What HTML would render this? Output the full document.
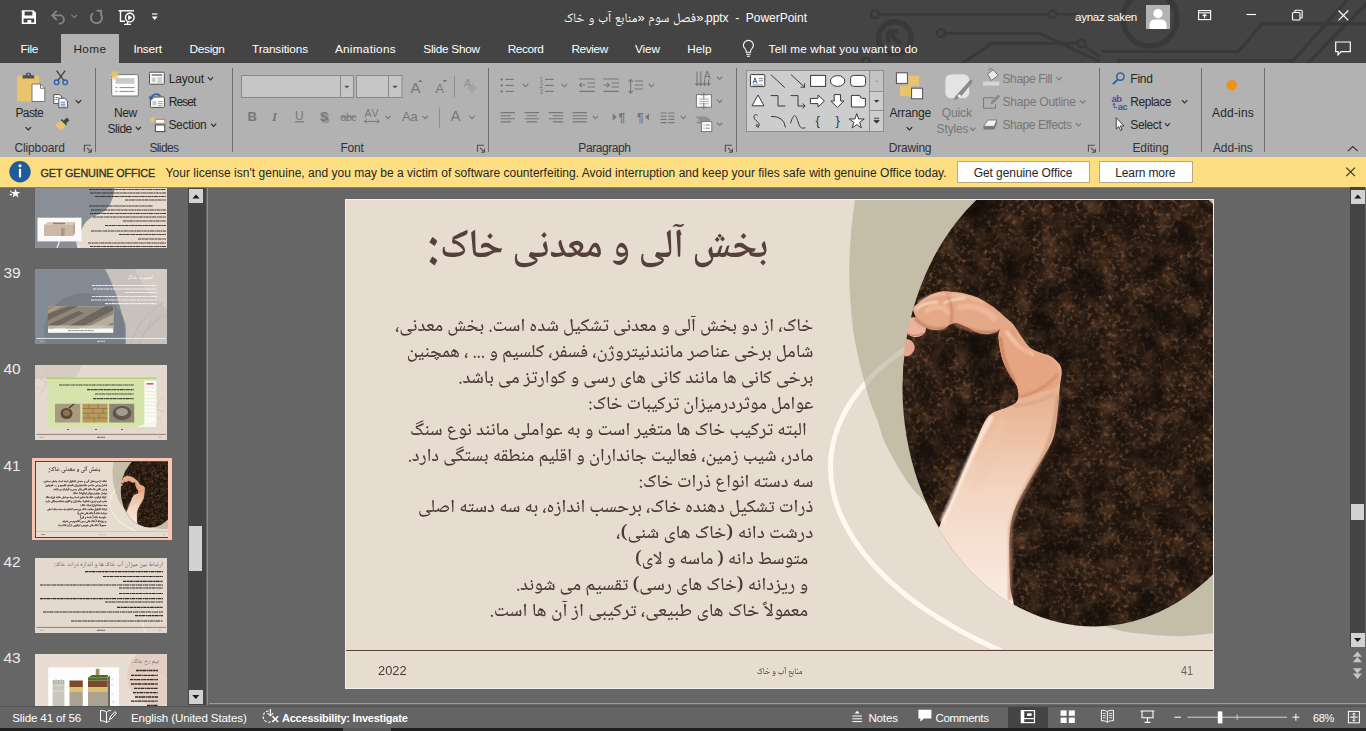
<!DOCTYPE html>
<html lang="en">
<head>
<meta charset="utf-8">
<title>PowerPoint</title>
<style>
*{box-sizing:border-box;margin:0;padding:0}
html,body{width:1366px;height:731px;overflow:hidden;background:#666}
body{font-family:"Liberation Sans","Noto Naskh Arabic","DejaVu Sans",sans-serif;font-size:12px;color:#262626;position:relative}
.a{position:absolute}
.t{position:absolute;white-space:nowrap;line-height:1}
svg{position:absolute;overflow:visible}
#titlebar{position:absolute;left:0;top:0;width:1366px;height:63px;background:#444;overflow:hidden}
#hometab{position:absolute;left:61px;top:34px;width:58px;height:30px;background:#b2b2b2}
#ribbon{position:absolute;left:0;top:63px;width:1366px;height:94px;background:#b2b2b2}
.vsep{position:absolute;width:1px;background:#6e6e6e;top:68px;height:84px}
#msgbar{position:absolute;left:0;top:157px;width:1366px;height:30.7px;background:#fdde82;border-bottom:1px solid #8d815f}
.mbtn{position:absolute;top:161px;height:21.5px;background:#fefefe;border:1px solid #b9aa7c}
#status{position:absolute;left:0;top:706px;width:1366px;height:22px;background:#646464;border-top:1px solid #525252}
#bottom{position:absolute;left:0;top:728px;width:1366px;height:3px;background:#1e1e1e}
#slide{position:absolute;left:345px;top:199px;width:869px;height:490px;background:#f4eee7}
.thumb{position:absolute;left:35px;width:132px;height:75px;overflow:hidden;background:#e7dcd0}
.num{position:absolute;left:3.5px;font-size:15.5px;color:#ececec;line-height:1}
#app{position:absolute;left:0;top:0;width:1366px;height:731px}

</style>
</head>
<body>
<div class="a" style="left:188px;top:187px;width:17.500px;height:518px;background:#444"></div>
<div class="a" style="left:189px;top:189px;width:14px;height:14px;background:#d2d2d2"></div>
<div class="a" style="left:189px;top:526px;width:13px;height:45px;background:#d2d2d2"></div>
<div class="a" style="left:189px;top:690px;width:13.500px;height:13.500px;background:#d2d2d2"></div>
<div class="a" style="left:207px;top:187px;width:1px;height:517.500px;background:#8c8c8c"></div>
<svg width="208" height="519" viewBox="0 187 208 519" style="left:0;top:187px"><path d="M192.400 198.400 l3.600 -4 l3.600 4 z M192.200 695 h7.200 l-3.600 4 z" fill="#1a1a1a"/><path d="M15.50 188.70 L16.68 191.98 L20.16 192.09 L17.40 194.22 L18.38 197.56 L15.50 195.60 L12.62 197.56 L13.60 194.22 L10.84 192.09 L14.32 191.98 Z" fill="#fafafa"/><path d="M10 191.200 h1.600 M9.800 194.600 h2.200" stroke="#fafafa" stroke-width="1.100"/></svg>
<div class="num" style="top:265.4px">39</div>
<div class="num" style="top:361.4px">40</div>
<div class="num" style="top:457.9px">41</div>
<div class="num" style="top:553.9px">42</div>
<div class="num" style="top:649.9px">43</div>
<svg width="132" height="75" viewBox="0 0 132 75" style="left:35px;top:173px;overflow:hidden"><rect width="132" height="75" fill="#e6dbcf"/><path d="M0 0 H80 C80 22 78 36 62 42 C48 47 46 56 42 75 H0 Z" fill="#8a8e96"/><path d="M22 75 l3 -8 M44 75 l-3 -8" stroke="#f3efe9" stroke-width="1.200"/><rect x="2.500" y="44.700" width="44" height="23.700" fill="#fbfaf8"/><path d="M9 52 l4 -3 h27 l-2 3 z" fill="#d9cbbb"/><rect x="9" y="52" width="29" height="11" fill="#cbb9a6"/><path d="M38 52 l2 -3 v11 l-2 3 z" fill="#b7a592"/><path d="M18 50.500 h12" stroke="#8d7f72" stroke-width="1.500"/><rect x="26" y="55" width="3.500" height="8" fill="#a8988a"/><path d="M54.0 16.5 H131.0 M55.0 20.0 H131.0 M60.0 23.5 H131.0 M90.0 27.0 H131.0 M54.0 33.0 H118.0 M56.0 37.0 H131.0 M55.0 40.5 H131.0 M58.0 44.0 H131.0 M88.0 48.0 H131.0 M70.0 52.5 H131.0 M56.0 58.0 H131.0 M84.0 61.5 H131.0 M103.0 66.0 H131.0 M53.0 70.0 H131.0 M55.0 73.5 H131.0 " stroke="#2a1f1b" stroke-width="1.1" fill="none" opacity="0.85" stroke-dasharray="3.400 0.500 2 0.400 4.200 0.600 1.600 0.400"/></svg>
<svg width="132" height="75" viewBox="0 0 132 75" style="left:35px;top:269px;overflow:hidden"><rect width="132" height="75" fill="#858b95"/><path d="M70 0 H132 V75 H91 C90 50 82 22 70 0 Z" fill="#c9c1bb"/><path d="M100 0 H132 V40 C118 30 106 16 100 0 Z" fill="#d9d0c8" opacity="0.700"/><path d="M96 75 C100 60 110 45 128 34 M104 75 C108 64 116 54 130 46 M112 62 l4 -10 M118 56 l6 -9 M108 66 l-6 -6" stroke="#bdb5af" stroke-width="1" fill="none"/><ellipse cx="50" cy="62" rx="41" ry="38" fill="#767c86" opacity="0.800"/><rect x="13" y="37.200" width="65.300" height="26.600" fill="#fbfaf8"/><rect x="13" y="37.200" width="65.300" height="22" fill="#8f8679"/><path d="M13 45 l20 -7.800 h10 l-30 14 z M30 59.200 l40 -22 h8.300 v4 l-34 18 z M13 56 l30 -14 l6 2 l-30 15.200 h-6 z" fill="#6d675e"/><path d="M50 59.200 l28.300 -14 v8 l-12 6 z" fill="#b9ae9c"/><path d="M13 41 l8 -3.800 h6 l-14 7 z" fill="#b09c7c"/><path d="M13 56.500 h65.300 v2.700 h-65.300 z" fill="#c9c5bd" opacity="0.800"/><path d="M33.0 61.6 H59.0 " stroke="#555" stroke-width="0.9" fill="none" opacity="0.7" stroke-dasharray="3.400 0.500 2 0.400 4.200 0.600 1.600 0.400"/><path d="M57.0 16.5 H122.0 M58.0 20.0 H122.0 M90.0 23.5 H122.0 M57.0 27.5 H122.0 M56.0 31.0 H122.0 M70.0 34.6 H122.0 " stroke="#f4f4f4" stroke-width="1.1" fill="none" opacity="0.9" stroke-dasharray="3.400 0.500 2 0.400 4.200 0.600 1.600 0.400"/><text x="118.5" y="10.3" direction="rtl" font-family="'Noto Naskh Arabic','DejaVu Sans',sans-serif" font-size="5.6" fill="#f6f6f6" textLength="26.0" lengthAdjust="spacingAndGlyphs">اهمیت خاک</text><path d="M1.500 69.400 H131" stroke="#f0f0f0" stroke-width="0.900"/><path d="M62.0 72.3 H70.0 " stroke="#f4f4f4" stroke-width="0.9" fill="none" opacity="0.8" stroke-dasharray="3.400 0.500 2 0.400 4.200 0.600 1.600 0.400"/><path d="M5.0 72.3 H9.0 M124.0 72.3 H126.0 " stroke="#d8d8d8" stroke-width="0.8" fill="none" opacity="0.6" stroke-dasharray="3.400 0.500 2 0.400 4.200 0.600 1.600 0.400"/></svg>
<svg width="132" height="75" viewBox="0 0 132 75" style="left:35px;top:365px;overflow:hidden"><rect width="132" height="75" fill="#e3d9cf"/><path d="M0 0 H46 C46 8 40 14 30 14 H0 Z" fill="#d6ccc1"/><path d="M4 30 C10 24 14 14 12 4 M8 26 l-6 -4 M11 18 l-7 -5 M122 62 C118 50 120 40 128 32 M121 52 l6 2 M122 44 l7 3" stroke="#d3c9be" stroke-width="1" fill="none"/><rect x="12" y="12.700" width="109.400" height="49.300" fill="#d7e3ac"/><rect x="12" y="12.700" width="109.400" height="1" fill="#a9c656"/><path d="M109.400 15.400 H121.400 V56 L115 62 H109.400 Z" fill="#fbfbf6"/><path d="M110.500 23 h10 M110.500 26.500 h10 M110.500 30 h10 M110.500 33.500 h10 M110.500 37 h10 M110.500 40.500 h10 M110.500 44 h10 M110.500 47.500 h10 M110.500 51 h10" stroke="#dfe6c6" stroke-width="0.600"/><path d="M111.500 18.800 h7" stroke="#e0508c" stroke-width="1.600"/><path d="M101 62 l20.400 -7 v7 z" fill="#f6f6ee"/><rect x="20" y="38.800" width="25.300" height="18.700" fill="#a79a7e"/><ellipse cx="31.500" cy="48.500" rx="6" ry="5.500" fill="#5d4a34"/><ellipse cx="31.500" cy="48" rx="3.500" ry="3" fill="#8c7350"/><path d="M34 43 l5 -4" stroke="#4a3a2a" stroke-width="1.500"/><rect x="47.500" y="38.800" width="25" height="18.700" fill="#b99a5e"/><path d="M47.500 43.500 h25 M47.500 48.200 h25 M47.500 53 h25 M54 38.800 v4.700 M63 38.800 v4.700 M58 43.500 v4.700 M68 43.500 v4.700 M53 48.200 v4.800 M64 48.200 v4.800 M59 53 v4.500" stroke="#8a6f3e" stroke-width="0.700"/><rect x="74.200" y="38.800" width="25" height="18.700" fill="#8e8674"/><ellipse cx="87" cy="48" rx="9.500" ry="7" fill="#5f574b"/><ellipse cx="87" cy="47" rx="6" ry="4" fill="#a39c8e"/><path d="M24.0 20.0 H98.7 M52.0 24.6 H98.7 M60.0 29.0 H98.7 M58.0 33.6 H98.7 " stroke="#2a2a1c" stroke-width="1.1" fill="none" opacity="0.85" stroke-dasharray="3.400 0.500 2 0.400 4.200 0.600 1.600 0.400"/><path d="M32.0 64.5 H34.0 M60.0 64.5 H62.0 M86.0 64.5 H88.0 " stroke="#333" stroke-width="0.9" fill="none" opacity="0.8" stroke-dasharray="3.400 0.500 2 0.400 4.200 0.600 1.600 0.400"/><path d="M1.500 69.400 H131" stroke="#5e443a" stroke-width="0.600"/><path d="M62.0 72.3 H70.0 " stroke="#3a2a25" stroke-width="0.9" fill="none" opacity="0.8" stroke-dasharray="3.400 0.500 2 0.400 4.200 0.600 1.600 0.400"/><path d="M5.0 72.3 H9.0 M124.0 72.3 H126.0 " stroke="#8a7a72" stroke-width="0.8" fill="none" opacity="0.6" stroke-dasharray="3.400 0.500 2 0.400 4.200 0.600 1.600 0.400"/></svg>
<div class="a" style="left:32px;top:457.500px;width:139.500px;height:82.500px;background:#f7c5b1"></div>
<div class="a" style="left:34.500px;top:460.500px;width:133.500px;height:77px;background:#4a4444"></div>
<svg width="132" height="75" viewBox="0 0 132 75" style="left:35.500px;top:461.500px;overflow:hidden"><g transform="scale(0.15225 0.15369) translate(-346 -200)"><use href="#sg"/><use href="#stt" stroke="#55403a" stroke-width="0.800" stroke-opacity="0.600"/><use href="#st" stroke="#3a2b26" stroke-width="1.800" stroke-opacity="0.700"/><use href="#sf"/></g></svg>
<svg width="132" height="75" viewBox="0 0 132 75" style="left:35px;top:557.5px;overflow:hidden"><rect width="132" height="75" fill="#e3d9cf"/><path d="M112 75 C104 66 108 56 122 52" stroke="#fbf5ee" stroke-width="0.900" fill="none"/><text x="128.0" y="8.2" direction="rtl" font-family="'Noto Naskh Arabic','DejaVu Sans',sans-serif" font-size="6.2" fill="#6a5a55" textLength="109.0" lengthAdjust="spacingAndGlyphs">ارتباط بین میزان آب خاک ها و اندازه ذرات خاک:</text><path d="M50.0 13.6 H128.0 M68.0 18.5 H128.0 M88.0 23.4 H128.0 M5.0 27.0 H128.0 M84.0 30.0 H128.0 M84.0 35.5 H128.0 M5.0 40.6 H128.0 M70.0 44.0 H128.0 M82.0 49.3 H128.0 M8.0 54.0 H128.0 M100.0 57.6 H128.0 M36.0 63.0 H128.0 " stroke="#1f1714" stroke-width="1.2" fill="none" opacity="0.9" stroke-dasharray="3.400 0.500 2 0.400 4.200 0.600 1.600 0.400"/><path d="M1.500 69.400 H131" stroke="#5e443a" stroke-width="0.600"/><path d="M62.0 72.3 H70.0 " stroke="#3a2a25" stroke-width="0.9" fill="none" opacity="0.8" stroke-dasharray="3.400 0.500 2 0.400 4.200 0.600 1.600 0.400"/><path d="M5.0 72.3 H9.0 M124.0 72.3 H126.0 " stroke="#8a7a72" stroke-width="0.8" fill="none" opacity="0.6" stroke-dasharray="3.400 0.500 2 0.400 4.200 0.600 1.600 0.400"/></svg>
<svg width="132" height="75" viewBox="0 0 132 75" style="left:35px;top:653.5px;overflow:hidden"><rect width="132" height="75" fill="#e8ddd2"/><circle cx="122" cy="22" r="30" fill="#e4cfc5"/><path d="M96 30 C110 14 124 20 132 26" stroke="#f0e2da" stroke-width="0.800" fill="none"/><rect x="13.200" y="13.400" width="70.800" height="52" fill="#fdfdfd"/><rect x="17.600" y="26" width="11.800" height="30" fill="#c9c6bd"/><path d="M18.500 26 v5 M21 25 v6 M23.500 26 v5 M26 25 v6 M28.500 26 v5" stroke="#9a968c" stroke-width="0.500"/><path d="M17.600 31 h11.800 M17.600 37 h11.800" stroke="#efefef" stroke-width="0.500"/><rect x="34.500" y="26.500" width="13.300" height="6.500" fill="#7a4a2a"/><rect x="34.500" y="33" width="13.300" height="4.500" fill="#dcbf72"/><rect x="34.500" y="37.500" width="13.300" height="20" fill="#aaa392"/><rect x="60.800" y="14.800" width="3.600" height="8.500" fill="#a08d62"/><path d="M53 23.500 l4 -2.500 h16 l-0.300 2.500 z" fill="#4c6a26"/><rect x="53" y="23.500" width="19.700" height="3" fill="#55702a"/><rect x="53" y="26.500" width="19.700" height="6.500" fill="#7a4a2a"/><rect x="53" y="33" width="19.700" height="4.500" fill="#dcbf72"/><rect x="53" y="37.500" width="19.700" height="20" fill="#aaa392"/><path d="M72.700 23.500 l2.300 -2 v36 h-2.300 z" fill="#6f6757"/><path d="M76.500 25 h1.500 M76.500 31 h1.500 M76.500 40 h1.500 M76.500 48 h3" stroke="#aaa" stroke-width="0.600"/><text x="124.0" y="9.0" direction="rtl" font-family="'Noto Naskh Arabic','DejaVu Sans',sans-serif" font-size="5.8" fill="#7a6a66" textLength="27.5" lengthAdjust="spacingAndGlyphs">نیم رخ خاک:</text><path d="M101.0 16.5 H123.0 M96.0 21.4 H123.0 M95.0 25.7 H123.0 M96.0 30.0 H123.0 M99.0 34.4 H123.0 M98.0 38.7 H123.0 M100.0 43.0 H123.0 M96.0 47.2 H123.0 M112.0 51.5 H123.0 " stroke="#1f1714" stroke-width="1.3" fill="none" opacity="0.9" stroke-dasharray="3.400 0.500 2 0.400 4.200 0.600 1.600 0.400"/></svg><div id="slide"></div>
<svg width="867" height="488" viewBox="346 200 867 488" style="left:346px;top:200px;overflow:hidden">
<defs><clipPath id="cs"><rect x="346" y="200" width="867" height="488"/></clipPath><clipPath id="cp"><ellipse cx="1093.13" cy="388.54" rx="190.65" ry="237.88" transform="rotate(-0.55 1093.13 388.54)"/></clipPath><clipPath id="cp2"><ellipse cx="1093.13" cy="388.54" rx="191.35" ry="238.58" transform="rotate(-0.55 1093.13 388.54)"/></clipPath><clipPath id="cw"><rect x="346" y="200" width="867" height="449"/></clipPath><filter id="soil" x="0" y="0" width="100%" height="100%" color-interpolation-filters="sRGB"><feTurbulence type="fractalNoise" baseFrequency="0.24" numOctaves="3" seed="7" result="n"/><feColorMatrix in="n" type="matrix" values="0 0 0 0 0.43  0 0 0 0 0.30  0 0 0 0 0.20  3.0 0 0 0 -1.50" result="g"/><feTurbulence type="fractalNoise" baseFrequency="0.07" numOctaves="2" seed="11" result="m"/><feColorMatrix in="m" type="matrix" values="0 0 0 0 0.30  0 0 0 0 0.20  0 0 0 0 0.135  0 2.6 0 0 -1.06" result="g2"/><feTurbulence type="fractalNoise" baseFrequency="0.03" numOctaves="2" seed="3" result="n2"/><feColorMatrix in="n2" type="matrix" values="0 0 0 0 0.06  0 0 0 0 0.04  0 0 0 0 0.03  0 0 2.0 0 -0.78" result="d"/><feMerge><feMergeNode in="SourceGraphic"/><feMergeNode in="g2"/><feMergeNode in="g"/><feMergeNode in="d"/></feMerge></filter><linearGradient id="skin" x1="0" y1="0" x2="0" y2="1"><stop offset="0" stop-color="#e2a583"/><stop offset="0.35" stop-color="#e9b595"/><stop offset="0.62" stop-color="#f3d6c2"/><stop offset="1" stop-color="#fbefe8"/></linearGradient><filter id="b1"><feGaussianBlur stdDeviation="1.2"/></filter><filter id="b3"><feGaussianBlur stdDeviation="3"/></filter></defs>
<g id="sg">
<rect x="346" y="200" width="867" height="488" fill="#e7dcd0"/>
<g clip-path="url(#cw)"><ellipse cx="1248.5" cy="492.5" rx="419" ry="214.5" transform="rotate(4.7 1248.5 492.5)" fill="none" stroke="#fff8f0" stroke-width="5"/></g>
<path d="M857.0 180.0 C792.8 183.3 855.9 190.7 854.9 199.6 C853.9 208.5 852.0 221.3 851.1 233.3 C850.2 245.3 849.2 258.8 849.2 271.6 C849.2 284.4 850.2 298.4 851.1 309.9 C852.0 321.4 853.0 329.6 854.9 340.5 C856.8 351.4 860.0 364.8 862.6 375.0 C865.2 385.2 867.8 394.3 870.2 401.8 C872.7 409.3 875.1 413.8 877.3 420.0 C879.5 426.2 880.8 432.8 883.4 439.2 C886.0 445.6 889.5 451.9 893.0 458.3 C896.5 464.7 900.4 471.4 904.5 477.5 C908.6 483.6 911.1 487.3 917.9 494.7 C924.6 502.1 931.3 508.6 945.0 522.0 C958.7 535.4 980.8 560.3 1000.0 575.0 C1019.2 589.7 1041.2 601.1 1060.0 610.0 C1078.8 618.9 1100.1 624.6 1112.9 628.5 C1125.7 632.4 1127.1 632.0 1136.8 633.3 C1146.5 634.5 1161.9 635.6 1171.0 636.0 C1180.1 636.4 1184.8 635.9 1191.6 635.4 C1198.4 634.9 1204.0 634.5 1212.1 633.3 C1220.2 632.1 1235.3 703.5 1240.0 628.0 C1244.7 552.5 1303.8 254.7 1240.0 180.0 C1176.2 105.3 921.2 176.7 857.0 180.0 Z" fill="#a19e80" fill-opacity="0.5"/>
<g clip-path="url(#cp)">
<rect x="895" y="200" width="320" height="440" fill="#241811" filter="url(#soil)"/>
</g><g clip-path="url(#cp2)">
<path d="M913.1 308.7 C913.5 307.3 913.8 306.7 916.3 304.6 C918.8 302.6 923.7 298.6 927.8 296.4 C931.9 294.2 936.1 292.2 941.0 291.5 C945.9 290.8 952.8 291.8 957.4 292.3 C962.0 292.9 965.1 293.7 968.9 294.8 C972.7 295.9 976.3 296.8 980.4 298.9 C984.5 300.9 989.4 304.1 993.5 307.1 C997.6 310.1 1001.7 314.1 1005.0 317.0 C1008.3 319.9 1010.7 321.4 1013.2 324.3 C1015.7 327.2 1017.0 330.4 1019.8 334.2 C1022.5 338.0 1026.4 344.3 1029.7 347.3 C1033.0 350.3 1036.0 350.8 1039.5 352.3 C1043.0 353.8 1047.7 354.5 1051.0 356.4 C1054.3 358.3 1057.4 361.2 1059.2 363.8 C1061.0 366.4 1061.6 368.4 1061.7 372.0 C1061.8 375.6 1060.3 382.1 1060.0 385.1 C1059.7 388.1 1060.2 383.7 1059.6 390.0 C1059.0 396.3 1057.7 414.1 1056.3 422.9 C1054.9 431.7 1054.4 435.5 1051.4 442.6 C1048.4 449.7 1042.7 457.9 1038.3 465.6 C1033.9 473.3 1028.9 481.5 1025.1 488.6 C1021.3 495.7 1017.8 501.7 1015.3 508.3 C1012.8 514.9 1011.3 520.3 1010.3 528.0 C1009.3 535.7 1009.4 544.4 1009.4 554.3 C1009.4 564.1 1009.9 578.1 1010.3 587.1 C1010.7 596.1 1016.2 603.9 1012.0 608.0 C1007.8 612.1 999.5 624.7 985.0 612.0 C970.5 599.3 932.8 546.0 925.0 532.0 C917.2 518.0 935.3 529.8 938.0 528.0 C940.7 526.2 939.5 525.2 941.4 521.4 C943.3 517.6 946.9 511.0 949.6 505.0 C952.3 499.0 955.1 491.9 957.8 485.3 C960.5 478.7 963.0 472.7 966.0 465.6 C969.0 458.5 972.8 449.7 975.8 442.6 C978.8 435.5 981.2 427.8 984.0 422.9 C986.8 418.0 988.7 415.5 992.3 413.0 C995.9 410.5 1001.6 409.6 1005.4 408.0 C1009.2 406.4 1013.1 405.1 1015.3 403.1 C1017.5 401.1 1018.2 399.0 1018.4 396.0 C1018.6 393.0 1017.9 388.6 1016.5 385.1 C1015.1 381.7 1012.2 379.1 1010.0 375.3 C1007.8 371.5 1005.0 366.5 1003.4 362.1 C1001.8 357.7 1000.9 353.4 1000.1 349.0 C999.3 344.6 998.5 339.1 998.5 335.8 C998.5 332.5 1000.4 330.0 1000.1 329.3 C999.8 328.6 999.0 330.9 996.8 331.7 C994.6 332.5 990.3 334.0 987.0 334.2 C983.7 334.4 980.4 333.7 977.1 332.6 C973.8 331.5 970.6 329.1 967.3 327.6 C964.0 326.1 960.1 324.1 957.4 323.5 C954.6 322.9 953.0 323.5 950.8 324.3 C948.6 325.1 946.8 327.4 944.3 328.4 C941.8 329.4 938.8 330.1 936.0 330.1 C933.2 330.1 930.2 329.4 927.8 328.4 C925.3 327.4 923.2 326.1 921.3 324.3 C919.4 322.5 917.5 319.7 916.3 317.8 C915.1 315.9 914.4 314.3 913.9 312.8 C913.4 311.3 912.7 310.1 913.1 308.7 Z" fill="#2a1a12" opacity="0.600" filter="url(#b3)" transform="translate(2.500 3)"/>
<path d="M905 322 C909 315 920 316 925 324 C928 331 924 336 917 337 C911 337.500 906 334 904 329 Z" fill="#eab39d"/>
<path d="M906.500 333 C911 336 918 336.500 923 333" stroke="#b9755c" stroke-width="1.200" fill="none" opacity="0.700"/>
<path d="M902 340 C907 337.500 913 340 914.700 346 C915 352 911 356 905 356.500 C902 353 901 346 902 340 Z" fill="#e4a790"/>
<path d="M913.1 308.7 C913.5 307.3 913.8 306.7 916.3 304.6 C918.8 302.6 923.7 298.6 927.8 296.4 C931.9 294.2 936.1 292.2 941.0 291.5 C945.9 290.8 952.8 291.8 957.4 292.3 C962.0 292.9 965.1 293.7 968.9 294.8 C972.7 295.9 976.3 296.8 980.4 298.9 C984.5 300.9 989.4 304.1 993.5 307.1 C997.6 310.1 1001.7 314.1 1005.0 317.0 C1008.3 319.9 1010.7 321.4 1013.2 324.3 C1015.7 327.2 1017.0 330.4 1019.8 334.2 C1022.5 338.0 1026.4 344.3 1029.7 347.3 C1033.0 350.3 1036.0 350.8 1039.5 352.3 C1043.0 353.8 1047.7 354.5 1051.0 356.4 C1054.3 358.3 1057.4 361.2 1059.2 363.8 C1061.0 366.4 1061.6 368.4 1061.7 372.0 C1061.8 375.6 1060.3 382.1 1060.0 385.1 C1059.7 388.1 1060.2 383.7 1059.6 390.0 C1059.0 396.3 1057.7 414.1 1056.3 422.9 C1054.9 431.7 1054.4 435.5 1051.4 442.6 C1048.4 449.7 1042.7 457.9 1038.3 465.6 C1033.9 473.3 1028.9 481.5 1025.1 488.6 C1021.3 495.7 1017.8 501.7 1015.3 508.3 C1012.8 514.9 1011.3 520.3 1010.3 528.0 C1009.3 535.7 1009.4 544.4 1009.4 554.3 C1009.4 564.1 1009.9 578.1 1010.3 587.1 C1010.7 596.1 1016.2 603.9 1012.0 608.0 C1007.8 612.1 999.5 624.7 985.0 612.0 C970.5 599.3 932.8 546.0 925.0 532.0 C917.2 518.0 935.3 529.8 938.0 528.0 C940.7 526.2 939.5 525.2 941.4 521.4 C943.3 517.6 946.9 511.0 949.6 505.0 C952.3 499.0 955.1 491.9 957.8 485.3 C960.5 478.7 963.0 472.7 966.0 465.6 C969.0 458.5 972.8 449.7 975.8 442.6 C978.8 435.5 981.2 427.8 984.0 422.9 C986.8 418.0 988.7 415.5 992.3 413.0 C995.9 410.5 1001.6 409.6 1005.4 408.0 C1009.2 406.4 1013.1 405.1 1015.3 403.1 C1017.5 401.1 1018.2 399.0 1018.4 396.0 C1018.6 393.0 1017.9 388.6 1016.5 385.1 C1015.1 381.7 1012.2 379.1 1010.0 375.3 C1007.8 371.5 1005.0 366.5 1003.4 362.1 C1001.8 357.7 1000.9 353.4 1000.1 349.0 C999.3 344.6 998.5 339.1 998.5 335.8 C998.5 332.5 1000.4 330.0 1000.1 329.3 C999.8 328.6 999.0 330.9 996.8 331.7 C994.6 332.5 990.3 334.0 987.0 334.2 C983.7 334.4 980.4 333.7 977.1 332.6 C973.8 331.5 970.6 329.1 967.3 327.6 C964.0 326.1 960.1 324.1 957.4 323.5 C954.6 322.9 953.0 323.5 950.8 324.3 C948.6 325.1 946.8 327.4 944.3 328.4 C941.8 329.4 938.8 330.1 936.0 330.1 C933.2 330.1 930.2 329.4 927.8 328.4 C925.3 327.4 923.2 326.1 921.3 324.3 C919.4 322.5 917.5 319.7 916.3 317.8 C915.1 315.9 914.4 314.3 913.9 312.8 C913.4 311.3 912.7 310.1 913.1 308.7 Z" fill="url(#skin)"/>
<path d="M1000.1 329.3 C1001.0 327.8 1002.6 327.1 1004.0 326.5 C1005.4 325.9 1006.8 325.8 1008.3 326.0 C1009.8 326.2 1011.3 326.3 1013.2 328.0 C1015.1 329.7 1017.2 332.7 1019.8 336.0 C1022.4 339.3 1025.7 345.1 1029.0 348.0 C1032.3 350.9 1036.0 351.8 1039.5 353.5 C1043.0 355.2 1047.1 356.1 1050.0 358.0 C1052.9 359.9 1055.4 362.5 1057.0 365.0 C1058.6 367.5 1059.5 369.5 1059.5 373.0 C1059.5 376.5 1060.2 382.8 1057.0 386.0 C1053.8 389.2 1045.8 390.2 1040.0 392.0 C1034.2 393.8 1025.8 398.0 1022.0 397.0 C1018.2 396.0 1019.0 389.6 1017.0 386.0 C1015.0 382.4 1012.3 379.3 1010.0 375.3 C1007.7 371.3 1005.0 366.5 1003.4 362.1 C1001.8 357.7 1000.9 353.4 1000.1 349.0 C999.3 344.6 998.5 339.1 998.5 335.8 C998.5 332.5 999.2 330.9 1000.1 329.3 Z" fill="#e6a582"/>
<g filter="url(#b1)" fill="none"><path d="M915.500 310 C920 305 929 302 938.500 302" stroke="#f7e3cf" stroke-width="1.800"/><path d="M943 303.500 C949 300 957 298.500 965 298.500" stroke="#f7e3cf" stroke-width="1.800"/><path d="M918 303 C926 296.500 936 293.500 946 294 M950 295 C960 294 972 297 984 303" stroke="#f3c4a8" stroke-width="2.400" opacity="0.800"/><path d="M925 312 C935 305 945 306 948 314" stroke="#f3bfa2" stroke-width="5" opacity="0.700"/><path d="M958 308 C972 303 988 310 996 320" stroke="#f3bfa2" stroke-width="6" opacity="0.700"/><path d="M951 324 C952.500 315 952 305 948.500 297" stroke="#b9694a" stroke-width="1.600" opacity="0.750"/><path d="M915 318 C922 327 936 331.500 946 327.500 M955 324 C966 329.500 985 335.500 998 331" stroke="#b86f50" stroke-width="2.600" opacity="0.800"/><path d="M1006 331 C1012 340 1022 350 1034 355" stroke="#f5ceb2" stroke-width="4" opacity="0.800"/><path d="M1000.500 337 C1001.500 352 1005 366 1015 382" stroke="#b9694a" stroke-width="2.600" opacity="0.650"/><path d="M1012 330 C1016 340 1024 350 1032 356" stroke="#c98462" stroke-width="1.200" opacity="0.500"/><path d="M1019 397 C1032 394 1047 387 1058 374" stroke="#b9694a" stroke-width="1.800" opacity="0.600"/><path d="M1014 406 C1027 405 1042 401 1054 394" stroke="#c98a6a" stroke-width="1.500" opacity="0.550"/><path d="M1058 395 C1056 425 1050 445 1037 467 C1026 487 1015 507 1010.500 528 L1010 600" stroke="#c48d70" stroke-width="4" opacity="0.600"/><path d="M992 416 C982 432 968 462 952 500 L942 522" stroke="#fdeee4" stroke-width="5" opacity="0.750"/><path d="M1003 420 C995 440 985 465 975 490" stroke="#f1c9ae" stroke-width="10" opacity="0.350"/></g>
</g>
<rect x="346" y="650" width="867" height="1" fill="#5e443a"/>
</g><g id="stt">
<text x="768.2" y="256.5" direction="rtl" text-anchor="start" font-family="'Noto Naskh Arabic','DejaVu Sans',sans-serif" font-size="40.5" font-weight="600" fill="#55403a" textLength="341.7" lengthAdjust="spacingAndGlyphs">بخش آلی و معدنی خاک<tspan dy="5.500" font-size="56">:</tspan></text>
</g><g id="st">
<text x="813.3" y="330.7" direction="rtl" text-anchor="start" font-family="'Noto Naskh Arabic','DejaVu Sans',sans-serif" font-size="18.2" font-weight="500" fill="#4b3a33" textLength="418.3" lengthAdjust="spacingAndGlyphs">خاک، از دو بخش آلی و معدنی تشکیل شده است. بخش معدنی،</text>
<text x="813.3" y="356.7" direction="rtl" text-anchor="start" font-family="'Noto Naskh Arabic','DejaVu Sans',sans-serif" font-size="18.2" font-weight="500" fill="#4b3a33" textLength="406.6" lengthAdjust="spacingAndGlyphs">شامل برخی عناصر مانندنیتروژن، فسفر، کلسیم و ... ، همچنین</text>
<text x="813.3" y="382.6" direction="rtl" text-anchor="start" font-family="'Noto Naskh Arabic','DejaVu Sans',sans-serif" font-size="18.2" font-weight="500" fill="#4b3a33" textLength="355.0" lengthAdjust="spacingAndGlyphs">برخی کانی ها مانند کانی های رسی و کوارتز می باشد.</text>
<text x="813.3" y="408.6" direction="rtl" text-anchor="start" font-family="'Noto Naskh Arabic','DejaVu Sans',sans-serif" font-size="18.2" font-weight="500" fill="#4b3a33" textLength="225.0" lengthAdjust="spacingAndGlyphs">عوامل موثردرمیزان ترکیبات خاک:</text>
<text x="806.7" y="434.5" direction="rtl" text-anchor="start" font-family="'Noto Naskh Arabic','DejaVu Sans',sans-serif" font-size="18.2" font-weight="500" fill="#4b3a33" textLength="396.7" lengthAdjust="spacingAndGlyphs">البته ترکیب خاک ها متغیر است و به عواملی مانند نوع سنگ</text>
<text x="813.3" y="460.5" direction="rtl" text-anchor="start" font-family="'Noto Naskh Arabic','DejaVu Sans',sans-serif" font-size="18.2" font-weight="500" fill="#4b3a33" textLength="405.5" lengthAdjust="spacingAndGlyphs">مادر، شیب زمین، فعالیت جانداران و اقلیم منطقه بستگی دارد.</text>
<text x="813.3" y="486.5" direction="rtl" text-anchor="start" font-family="'Noto Naskh Arabic','DejaVu Sans',sans-serif" font-size="18.2" font-weight="500" fill="#4b3a33" textLength="174.5" lengthAdjust="spacingAndGlyphs">سه دسته انواع ذرات خاک:</text>
<text x="813.3" y="512.4" direction="rtl" text-anchor="start" font-family="'Noto Naskh Arabic','DejaVu Sans',sans-serif" font-size="18.2" font-weight="500" fill="#4b3a33" textLength="395.3" lengthAdjust="spacingAndGlyphs">ذرات تشکیل دهنده خاک، برحسب اندازه، به سه دسته اصلی</text>
<text x="813.3" y="538.4" direction="rtl" text-anchor="start" font-family="'Noto Naskh Arabic','DejaVu Sans',sans-serif" font-size="18.2" font-weight="500" fill="#4b3a33" textLength="197.3" lengthAdjust="spacingAndGlyphs">درشت دانه (خاک های شنی)،</text>
<text x="808.2" y="564.3" direction="rtl" text-anchor="start" font-family="'Noto Naskh Arabic','DejaVu Sans',sans-serif" font-size="18.2" font-weight="500" fill="#4b3a33" textLength="173.2" lengthAdjust="spacingAndGlyphs">متوسط دانه ( ماسه و لای)</text>
<text x="808.2" y="590.3" direction="rtl" text-anchor="start" font-family="'Noto Naskh Arabic','DejaVu Sans',sans-serif" font-size="18.2" font-weight="500" fill="#4b3a33" textLength="292.3" lengthAdjust="spacingAndGlyphs">و ریزدانه (خاک های رسی) تقسیم می شوند.</text>
<text x="808.2" y="616.3" direction="rtl" text-anchor="start" font-family="'Noto Naskh Arabic','DejaVu Sans',sans-serif" font-size="18.2" font-weight="500" fill="#4b3a33" textLength="318.6" lengthAdjust="spacingAndGlyphs">معمولاً خاک های طبیعی، ترکیبی از آن ها است.</text>
</g><g id="sf">
<text x="378" y="674.800" font-family="'Liberation Sans',sans-serif" font-size="12" fill="#4b3a33" textLength="28.600" lengthAdjust="spacingAndGlyphs">2022</text>
<text x="1180.900" y="674.800" font-family="'Liberation Sans',sans-serif" font-size="12" fill="#6e625c" textLength="12.200" lengthAdjust="spacingAndGlyphs">41</text>
<text x="802.5" y="673.5" direction="rtl" text-anchor="start" font-family="'Noto Naskh Arabic','DejaVu Sans',sans-serif" font-size="9" font-weight="400" fill="#4b3a33" textLength="45.7" lengthAdjust="spacingAndGlyphs">منابع آب و خاک</text>
</g>
</svg><div id="titlebar"><svg width="1366" height="63" viewBox="0 0 1366 63" style="left:0;top:0">
<g fill="none" stroke="#393939" stroke-width="2.600"><path d="M879 14.300 H1048.600 M1056.600 14.300 H1078"/><circle cx="874.900" cy="14.300" r="3.800"/><circle cx="1052.600" cy="14.300" r="3.800"/><circle cx="894.800" cy="37.900" r="16.200" stroke-width="5.500"/><path d="M888 31.500 h10.500 M888 31.500 v10.500 M888 31.500 l12.500 12.500" stroke-width="4.500"/><circle cx="940.900" cy="33.200" r="3.800"/><path d="M945 33.200 H1039.300 L1100 61.500" stroke-width="3"/><path d="M961 64 L992.200 43.300 H1077.300" stroke-width="3"/><circle cx="1081.300" cy="43.500" r="3.800"/><path d="M1084.500 46 L1100 57" stroke-width="3"/><circle cx="866" cy="61.500" r="3.800"/><circle cx="1150" cy="19" r="27" stroke-width="5.500"/><path d="M1101 51.500 H1238.500 L1262 23.800 H1366" stroke-width="3.200"/><path d="M1117 60.600 H1293 L1349 -2" stroke-width="3.200"/><path d="M1307 64 L1368 2" stroke-width="3.200"/></g>
<path d="M21.800 10.200 h11.600 l2.600 2.600 v11.200 h-14.200 z M24.600 11.600 v4 h7.800 v-4 z M23.600 18.600 v4 h3.800 v-2.600 h3.800 v2.600 h3 v-4 z" fill="#fff" fill-rule="evenodd"/><path d="M23.200 17 h11.400 v0.010 h-11.400 z" fill="#fff"/>
<g fill="none" stroke="#858585" stroke-width="1.900"><path d="M56.800 10.800 l-4.600 4.600 l4.600 4.600"/><path d="M52.600 15.400 h7.200 a4.100 4.100 0 0 1 0 8.200 h-1.200"/></g>
<path d="M71.55 14.90 l2.75 2.80 l2.75 -2.80" fill="none" stroke="#858585" stroke-width="1.1"/>
<g fill="none" stroke="#858585" stroke-width="1.900"><path d="M100.400 13.600 a5.600 5.600 0 1 1 -7.400 -0.400"/><path d="M96.600 10.800 h4.600 v4.600"/></g>
<g fill="none" stroke="#fff" stroke-width="1.4"><path d="M118.5 10.8 h15.5"/><path d="M120.5 11 v10.2 h4.5"/><circle cx="129.8" cy="17.6" r="4.3"/><path d="M128.5 15.6 l3.2 2 l-3.2 2 z" fill="#fff" stroke-width="0.8"/><path d="M124 24.4 h7 M127.5 22 v2.4"/></g>
<path d="M152 14 h5.4" stroke="#fff" stroke-width="1.2"/><path d="M151.7 16.6 h6 l-3 3.3 z" fill="#fff"/>
<rect x="1146" y="5" width="24" height="24" fill="#b3b3b3"/><circle cx="1158" cy="13.6" r="4.6" fill="#fff"/><path d="M1149.5 29 v-4.5 a5 5 0 0 1 5 -5 h7 a5 5 0 0 1 5 5 v4.5 z" fill="#fff"/>
<g fill="none" stroke="#fff" stroke-width="1.1"><rect x="1198.6" y="10.6" width="12" height="9"/><path d="M1198.6 12.8 h12" /><path d="M1204.6 18.4 v-4 M1202.6 16.2 l2 -2 l2 2"/></g>
<path d="M1246.5 14.5 h9.5" stroke="#fff" stroke-width="1.1"/>
<g fill="none" stroke="#fff" stroke-width="1.1"><rect x="1292.5" y="12.5" width="7.5" height="7.5" rx="1"/><path d="M1294.8 12.3 v-1 a1 1 0 0 1 1 -1 h5.4 a1 1 0 0 1 1 1 v5.6 a1 1 0 0 1 -1 1 h-1"/></g>
<path d="M1338.5 10.5 l9.8 9.8 M1348.3 10.5 l-9.8 9.8" stroke="#fff" stroke-width="1.2"/>
<path d="M1335.7 42 h14.6 v9.6 h-9.2 l-3 3.2 v-3.2 h-2.4 z" fill="none" stroke="#fff" stroke-width="1.2"/>
<g fill="none" stroke="#fff" stroke-width="1.1"><path d="M746.2 52.2 v-1.4 c0 -1.5 -2.8 -3 -2.8 -5.4 a5 5 0 0 1 10 0 c0 2.4 -2.8 3.9 -2.8 5.4 v1.4 z"/><path d="M746.3 54.3 h4.2 M746.9 56.3 h3"/></g>
</svg></div>
<div id="hometab"></div>
<span class="t" style="left:561.50px;top:11.00px;font-size:13px;color:#fff;white-space:pre;width:145.5px;overflow:hidden;direction:rtl;text-align:right;height:16px;"><span dir="ltr" style="unicode-bidi:isolate">فصل سوم «منابع آب و خاک».</span></span>
<span class="t" style="left:706.00px;top:12.00px;font-size:12px;color:#fff;letter-spacing:-0.021px;white-space:pre;">pptx  -  PowerPoint</span>
<span class="t" style="left:1075.00px;top:11.00px;font-size:11.6px;color:#fff;letter-spacing:-0.283px;">aynaz saken</span>
<span class="t" style="left:20.40px;top:44.00px;font-size:11.8px;color:#fff;letter-spacing:-0.404px;">File</span>
<span class="t" style="left:73.40px;top:44.00px;font-size:11.8px;color:#262626;letter-spacing:0.383px;">Home</span>
<span class="t" style="left:133.40px;top:44.00px;font-size:11.8px;color:#fff;letter-spacing:-0.186px;">Insert</span>
<span class="t" style="left:189.60px;top:44.00px;font-size:11.8px;color:#fff;letter-spacing:-0.289px;">Design</span>
<span class="t" style="left:252.00px;top:44.00px;font-size:11.8px;color:#fff;letter-spacing:-0.115px;">Transitions</span>
<span class="t" style="left:334.90px;top:44.00px;font-size:11.8px;color:#fff;letter-spacing:0.264px;">Animations</span>
<span class="t" style="left:423.30px;top:44.00px;font-size:11.8px;color:#fff;letter-spacing:-0.253px;">Slide Show</span>
<span class="t" style="left:507.70px;top:44.00px;font-size:11.8px;color:#fff;letter-spacing:-0.372px;">Record</span>
<span class="t" style="left:571.40px;top:44.00px;font-size:11.8px;color:#fff;letter-spacing:-0.348px;">Review</span>
<span class="t" style="left:634.90px;top:44.00px;font-size:11.8px;color:#fff;letter-spacing:-0.090px;">View</span>
<span class="t" style="left:687.20px;top:44.00px;font-size:11.8px;color:#fff;letter-spacing:0.034px;">Help</span>
<span class="t" style="left:768.60px;top:44.00px;font-size:11.8px;color:#fff;letter-spacing:0.134px;">Tell me what you want to do</span>
<div id="msgbar"></div>
<svg width="1366" height="30" viewBox="0 157 1366 30" style="left:0;top:157px"><circle cx="20" cy="171.8" r="10.7" fill="#1f5c99"/><circle cx="20" cy="165.7" r="1.5" fill="#fff"/><rect x="18.9" y="168.8" width="2.2" height="8.6" fill="#fff"/><path d="M1346.3 167.6 l8.6 8.6 M1354.9 167.6 l-8.6 8.6" stroke="#333" stroke-width="1.2"/></svg>
<span class="t" style="left:40.60px;top:168.00px;font-size:10.8px;color:#333;letter-spacing:-0.127px;-webkit-text-stroke:0.35px #333;">GET GENUINE OFFICE</span>
<span class="t" style="left:165.60px;top:167.00px;font-size:12px;color:#262626;letter-spacing:0.018px;">Your license isn't genuine, and you may be a victim of software counterfeiting. Avoid interruption and keep your files safe with genuine Office today.</span>
<div class="mbtn" style="left:957px;width:133px"></div><div class="mbtn" style="left:1099px;width:94px"></div>
<span class="t" style="left:973.70px;top:167.00px;font-size:12px;color:#262626;letter-spacing:-0.069px;">Get genuine Office</span>
<span class="t" style="left:1115.30px;top:167.00px;font-size:12px;color:#262626;letter-spacing:-0.138px;">Learn more</span><div id="ribbon"></div>
<div class="vsep" style="left:95px"></div>
<div class="vsep" style="left:232px"></div>
<div class="vsep" style="left:488px"></div>
<div class="vsep" style="left:736px"></div>
<div class="vsep" style="left:1099px"></div>
<div class="vsep" style="left:1201px"></div>
<div class="vsep" style="left:1264px"></div>
<svg width="1366" height="94" viewBox="0 63 1366 94" style="left:0;top:63px">
<rect x="17" y="75.5" width="22" height="26" rx="1.5" fill="#e8c56d"/><path d="M22.600 78.600 v-3.400 h3 a2.800 2.800 0 0 1 5.600 0 h3 v3.400 z" fill="#505050"/><circle cx="28.400" cy="74.600" r="1" fill="#b2b2b2"/><path d="M32 84 h8.5 l4.3 4.3 v13.2 h-12.8 z" fill="#fff" stroke="#6a6a6a" stroke-width="0.9"/><path d="M40.5 84 v4.3 h4.3" fill="none" stroke="#6a6a6a" stroke-width="0.9"/>
<path d="M25.55 127.10 l2.75 2.80 l2.75 -2.80" fill="none" stroke="#262626" stroke-width="1.1"/>
<g fill="none" stroke="#444" stroke-width="1.4"><path d="M56.6 70.6 l7.6 10.2 M65.2 70.6 l-7.6 10.2"/></g><g fill="none" stroke="#2e62a8" stroke-width="1.4"><circle cx="56.6" cy="82.3" r="2.3"/><circle cx="65.2" cy="82.3" r="2.3"/></g>
<g fill="#fff" stroke="#505050" stroke-width="1"><path d="M53.8 94.6 h5.6 l2.4 2.4 v6.6 h-8 z"/><path d="M58.8 98.2 h5.8 l2.8 2.8 v6.8 h-8.6 z"/></g><path d="M55.4 97.5 h3 M55.4 99.5 h2 M60.6 102.2 h4.8 M60.6 104.2 h4.8 M60.6 106 h4.8" stroke="#2e62a8" stroke-width="0.8"/>
<path d="M75.75 100.20 l2.75 2.80 l2.75 -2.80" fill="none" stroke="#262626" stroke-width="1.1"/>
<path d="M63.2 121.2 l3.6 -3.6 l2.6 2.6 l-3.6 3.6 z" fill="#444"/><path d="M58.2 122.4 l4.4 -2.2 l3.4 3.4 l-2.2 4.4 l-3.4 2.2 l-5.4 -5.4 z" fill="#e8c56d"/><path d="M61.4 119.6 l5.2 5.2" stroke="#444" stroke-width="1.6"/>
<g fill="none" stroke="#505050" stroke-width="1.100"><path d="M84.4 151.7 v-6.5 h6.5" transform="translate(0,0)"/><path d="M87.0 147.8 l4.3 4.3 M91.4 152.2 v-3.4 M91.4 152.2 h-3.4"/></g>
<rect x="111.7" y="74.6" width="26.6" height="21.4" rx="1.5" fill="#fdfdfd" stroke="#6a6a6a" stroke-width="0.9"/><rect x="115.5" y="78.2" width="19" height="5.6" fill="#c9c9c9"/><path d="M115.5 87.6 h2 M119.5 87.6 h15 M115.5 91.4 h2 M119.5 91.4 h15" stroke="#8a8a8a" stroke-width="1"/><g stroke="#e8c56d" stroke-width="1.5"><path d="M114.5 70.5 v9 M110 75 h9 M111.3 71.8 l6.4 6.4 M117.7 71.8 l-6.4 6.4"/></g>
<path d="M135.80 126.90 l2.60 2.80 l2.60 -2.80" fill="none" stroke="#262626" stroke-width="1.1"/>
<rect x="149.5" y="72.2" width="14.8" height="12" rx="1" fill="#fdfdfd" stroke="#505050" stroke-width="1"/><path d="M151.6 75 h10.6" stroke="#505050" stroke-width="1.2"/><rect x="151.6" y="77.6" width="4" height="4.6" fill="#c9c9c9"/><path d="M157.4 78 h4.8 M157.4 80 h4.8 M157.4 82 h4.8" stroke="#8a8a8a" stroke-width="0.8"/>
<path d="M207.90 77.20 l2.60 2.80 l2.60 -2.80" fill="none" stroke="#262626" stroke-width="1.1"/>
<rect x="150.4" y="97" width="14" height="10.4" rx="1" fill="#fdfdfd" stroke="#505050" stroke-width="1"/><rect x="152.4" y="101" width="4" height="4.4" fill="#c9c9c9"/><path d="M158 101.6 h4.6 M158 103.6 h4.6 M158 105.4 h4.6" stroke="#8a8a8a" stroke-width="0.8"/><path d="M150.8 99.6 a5.4 5.4 0 0 1 9.6 -3.4" fill="none" stroke="#2e62a8" stroke-width="1.6"/><path d="M148.4 96.2 l2.2 4.6 l3.6 -3.2 z" fill="#2e62a8"/>
<rect x="155.4" y="119.4" width="9.4" height="4" fill="#fdfdfd" stroke="#d98a3d" stroke-width="1.1"/><rect x="155.4" y="125" width="9.4" height="6.6" fill="#fdfdfd" stroke="#505050" stroke-width="1.1"/><g stroke="#e8c56d" stroke-width="1.1"><path d="M152.6 117 v5.6 M149.8 119.8 h5.6 M150.6 117.8 l4 4 M154.6 117.8 l-4 4"/></g>
<path d="M211.00 123.60 l2.60 2.80 l2.60 -2.80" fill="none" stroke="#262626" stroke-width="1.1"/>
<rect x="241.5" y="75.5" width="112" height="22" fill="#c6c6c6" stroke="#8a8a8a" stroke-width="1"/><path d="M340.5 75.5 v22" stroke="#8a8a8a"/><path d="M344.2 85.8 h5.2 l-2.6 2.8 z" fill="#555"/>
<rect x="356.5" y="75.5" width="45.5" height="22" fill="#c6c6c6" stroke="#8a8a8a" stroke-width="1"/><path d="M388.5 75.5 v22" stroke="#8a8a8a"/><path d="M392.4 85.8 h5.2 l-2.6 2.8 z" fill="#555"/>
<path d="M418 82 l2.3 -2.6 l2.3 2.6 z M442.6 80 h4.6 l-2.3 2.6 z" fill="#777"/>
<path d="M454.5 76 v21 M439.5 107.5 v20" stroke="#8e8e8e" stroke-width="1"/>
<path d="M468.200 87.600 l4.200 -4.200 l4.600 4.600 l-4.200 4.200 a1.200 1.200 0 0 1 -1.700 0 l-2.900 -2.900 a1.200 1.200 0 0 1 0 -1.700 z" fill="#a3a3a3"/>
<path d="M295 121.800 h8.8" stroke="#777" stroke-width="1.2"/><path d="M340 117 h16.4" stroke="#777" stroke-width="1"/>
<g fill="none" stroke="#777" stroke-width="1"><path d="M364.4 121.400 h14.8 M366.8 119.200 l-2.4 2.2 l2.4 2.2 M376.8 119.200 l2.4 2.2 l-2.4 2.2"/></g>
<path d="M385.30 115.80 l2.70 2.80 l2.70 -2.80" fill="none" stroke="#777" stroke-width="1.1"/>
<path d="M422.60 115.80 l2.70 2.80 l2.70 -2.80" fill="none" stroke="#777" stroke-width="1.1"/>
<path d="M469.30 115.80 l2.70 2.80 l2.70 -2.80" fill="none" stroke="#777" stroke-width="1.1"/>
<g fill="none" stroke="#505050" stroke-width="1.100"><path d="M477.5 151.7 v-6.5 h6.5" transform="translate(0,0)"/><path d="M480.1 147.8 l4.3 4.3 M484.5 152.2 v-3.4 M484.5 152.2 h-3.4"/></g>
<g fill="none" stroke="#777" stroke-width="1.1"><path d="M505.3 79.4 h8.6"/><path d="M505.3 85.4 h8.6"/><path d="M505.3 91.4 h8.6"/></g><g fill="#777"><circle cx="501.8" cy="79.4" r="1.2"/><circle cx="501.8" cy="85.4" r="1.2"/><circle cx="501.8" cy="91.4" r="1.2"/></g><g fill="none" stroke="#777" stroke-width="1.1"><path d="M545 79.4 h8.8"/><path d="M545 85.4 h8.8"/><path d="M545 91.4 h8.8"/><path d="M579.4 79 h15.6 M587.4 83 h7.6 M587.4 87 h7.6 M579.4 91.4 h15.6 M585.4 85 h-6 M581.8 82.8 l-2.4 2.2 l2.4 2.2"/><path d="M603.4 79 h15.6 M611.6 83 h7.4 M611.6 87 h7.4 M603.4 91.4 h15.6 M603.4 85 h6 M607 82.800 l2.4 2.200 l-2.4 2.200"/><path d="M634.6 81 h8.4 M634.6 85 h8.4 M634.6 89 h8.4 M630.6 79.6 v13.400 M628.4 81.8 l2.2 -2.4 l2.2 2.4 M628.4 90.8 l2.2 2.4 l2.2 -2.4"/><path d="M697 71.6 v13.600 M700.8 71.6 v13.600 M704.600 79.600 v5.600 M708.6 79.6 v5.6 M695.4 83.4 l1.6 2 l1.6 -2 M699.2 83.4 l1.6 2 l1.6 -2 M703 83.400 l1.600 2 l1.600 -2 M707 83.400 l1.600 2 l1.600 -2"/><path d="M500.6 112.6 h14.4 M500.6 115.7 h10.4 M500.6 118.8 h14.4 M500.6 121.9 h10.4 "/><path d="M524.6 112.6 h14.4 M526.6 115.7 h10.4 M524.6 118.8 h14.4 M526.6 121.9 h10.4 "/><path d="M548.8 112.6 h14.4 M552.8 115.7 h10.4 M548.8 118.8 h14.4 M552.8 121.9 h10.4 "/><path d="M572.6 112.6 h14.4 M572.6 115.7 h14.4 M572.6 118.8 h14.4 M572.6 121.9 h14.4 "/><path d="M660.6 113 h6 M668.400 113 h6 M660.6 116.2 h6 M668.400 116.200 h6 M660.6 119.4 h6 M668.400 119.400 h6 M660.6 122.6 h6 M668.400 122.600 h6"/></g><path d="M612.8 113.4 l4 3.600 l-4 3.600 z M649 113.400 l-4 3.600 l4 3.600 z" fill="#777"/><rect x="696.4" y="94.6" width="15" height="12.6" fill="#fdfdfd" stroke="#777" stroke-width="1"/><path d="M699 99 h10 M699 101.400 h10 M699 103.800 h10" stroke="#999" stroke-width="0.8"/><path d="M703.800 93.400 v6 M701.6 95.6 l2.2 -2.4 l2.2 2.4 M703.800 108.600 v-6 M701.6 106.400 l2.200 2.400 l2.200 -2.400" fill="none" stroke="#777" stroke-width="1"/><path d="M695.6 116.400 h11 l4 3.600 l-4 3.600 h-11 l4 -3.600 z" fill="#909090"/><rect x="701.4" y="121.600" width="10.4" height="10" fill="#fdfdfd" stroke="#777" stroke-width="1"/><path d="M703.600 125 h1 M705.800 125 h4 M703.600 128.200 h1 M705.800 128.200 h4" stroke="#777" stroke-width="0.9"/>
<path d="M522.90 84.00 l2.70 2.80 l2.70 -2.80" fill="none" stroke="#777" stroke-width="1.1"/>
<path d="M561.60 84.00 l2.70 2.80 l2.70 -2.80" fill="none" stroke="#777" stroke-width="1.1"/>
<path d="M648.80 84.00 l2.70 2.80 l2.70 -2.80" fill="none" stroke="#777" stroke-width="1.1"/>
<path d="M716.90 76.60 l2.70 2.80 l2.70 -2.80" fill="none" stroke="#777" stroke-width="1.1"/>
<path d="M716.90 99.60 l2.70 2.80 l2.70 -2.80" fill="none" stroke="#777" stroke-width="1.1"/>
<path d="M716.90 122.60 l2.70 2.80 l2.70 -2.80" fill="none" stroke="#777" stroke-width="1.1"/>
<path d="M592.80 115.80 l2.70 2.80 l2.70 -2.80" fill="none" stroke="#777" stroke-width="1.1"/>
<path d="M680.60 115.80 l2.70 2.80 l2.70 -2.80" fill="none" stroke="#777" stroke-width="1.1"/>
<g fill="none" stroke="#505050" stroke-width="1.100"><path d="M725.4 151.7 v-6.5 h6.5" transform="translate(0,0)"/><path d="M728.0 147.8 l4.3 4.3 M732.4 152.2 v-3.4 M732.4 152.2 h-3.4"/></g>
<rect x="746.5" y="70.5" width="137" height="61" fill="#cdcdcd" stroke="#8e8e8e" stroke-width="1"/><path d="M869.5 70.5 v61 M869.5 91.500 h14 M869.5 110.500 h14" stroke="#8e8e8e" stroke-width="1"/><rect x="870" y="71" width="13" height="20" fill="#c3c3c3"/><path d="M874.200 82 l2.400 -2.600 l2.400 2.600 z" fill="#aaa"/><path d="M874 100 h5.200 l-2.600 2.800 z" fill="#333"/><path d="M874 118.200 h5.200 M874 120.400 h5.200 l-2.600 2.800 z" fill="#333" stroke="#333" stroke-width="0.9"/>
<g fill="#fdfdfd" stroke="#3a3a3a" stroke-width="1"><rect x="750.400" y="74.600" width="14.400" height="12" rx="0.800"/><path d="M770.8 74.6 l14 13" fill="none"/><path d="M791 74.600 l13.600 12.600 M804.600 83.200 v4 h-4" fill="none"/><rect x="810.6" y="75.400" width="15" height="11"/><ellipse cx="837.6" cy="81" rx="7.200" ry="5.400"/><rect x="850.6" y="75.400" width="15" height="11" rx="3"/><path d="M758 95 l6 10.800 h-12 z"/><path d="M770.600 95.600 h7.400 v10.400 h7.400" fill="none"/><path d="M790.600 95.600 h7.400 v10.400 h7 M802.600 103.600 l2.600 2.400 l-2.600 2.400" fill="none"/><path d="M810.400 98.400 h7.600 v-3.400 l6.400 6 l-6.400 6 v-3.400 h-7.600 z"/><path d="M834.200 94.600 h6.400 v6.400 h3.400 l-6.600 6.400 l-6.600 -6.400 h3.400 z"/><path d="M851.400 107 v-11.600 h8.400 a3 3 0 0 0 3 3 h2.600 v6.600 a2 2 0 0 1 -2 2 z"/><path d="M757.600 115.400 c-2 -2.400 -5 0.400 -3 3.400 c2 3 5.600 4 4.400 7 c-0.800 2 -3.200 1 -2.800 -0.600 c0.600 -2 3 0 2 2.400" fill="none"/><path d="M771 116.400 q13 -0.400 14.400 11" fill="none"/><path d="M790.600 123.400 c3 -11 5.400 -9 7.400 -1.600 c2 7.600 4.400 6.400 7.600 6" fill="none"/></g>
<path d="M852.4 118.400 l3.300 0 l1.100 -3.200 l1.100 3.200 l3.300 0 l-2.700 2 l1 3.300 l-2.700 -2 l-2.700 2 l1 -3.300 z" fill="#fdfdfd" stroke="#3a3a3a" stroke-width="1" transform="translate(-599.8 -82.300) scale(1.700)" vector-effect="non-scaling-stroke"/>
<path d="M753 83.400 l2 -5.600 l2 5.600 M753.700 81.600 h2.600" fill="none" stroke="#2e62a8" stroke-width="1"/><path d="M758.600 78.600 h4.400 M758.600 80.800 h4.400 M752.600 85 h10.400" stroke="#666" stroke-width="0.800"/>
<rect x="908.4" y="75.700" width="10.800" height="10.300" fill="#e8c56d"/><rect x="899.9" y="85.800" width="11.400" height="10.500" fill="#e8c56d"/><rect x="896.4" y="72.800" width="11" height="10.600" fill="#fdfdfd" stroke="#505050" stroke-width="1"/><rect x="911.6" y="88.200" width="11" height="10.600" fill="#fdfdfd" stroke="#505050" stroke-width="1"/>
<path d="M906.65 127.10 l2.75 2.80 l2.75 -2.80" fill="none" stroke="#262626" stroke-width="1.1"/>
<rect x="945" y="74" width="24.600" height="24.600" rx="6" fill="#e4e4e4" stroke="#b9b9b9" stroke-width="1"/><path d="M960.600 96.600 c-3 3.600 -6 3.400 -7.600 3 c2 -1.200 1.800 -3 3.400 -4.800 z" fill="#8a8a8a"/><path d="M957 94.400 l12.600 -13.800 l3 -1 l-0.600 3.400 l-11.600 14.200 z" fill="#8a8a8a"/><circle cx="959.400" cy="96" r="1.500" fill="#fff"/>
<path d="M970.20 127.60 l2.60 2.80 l2.60 -2.80" fill="none" stroke="#777" stroke-width="1.1"/>
<path d="M987.400 74 l6 -4.200 l4.800 5.600 l-6.800 5 z" fill="#e9e9e9" stroke="#777" stroke-width="1"/><path d="M989.200 71 c-0.800 -2.600 2.600 -3.600 3 -1" fill="none" stroke="#777" stroke-width="1"/><rect x="983" y="81.600" width="16.400" height="4" fill="#d6d6d6"/>
<path d="M994.400 97.800 h-10.800 v10.400 h12 v-4" fill="none" stroke="#777" stroke-width="1"/><path d="M990.200 104.600 l1 -3.200 l7 -7 l2.200 2.200 l-7 7 z" fill="#8a8a8a"/>
<path d="M983.600 126.400 l4.400 -6.400 h9 l-2.800 6.400 z" fill="#f1f1f1" stroke="#777" stroke-width="0.900"/><path d="M983.600 126.400 h10.600 l2.800 -6.400 v3.600 l-2.800 6 h-10.600 z" fill="#777"/>
<path d="M1056.40 77.20 l2.60 2.80 l2.60 -2.80" fill="none" stroke="#777" stroke-width="1.1"/>
<path d="M1080.10 100.40 l2.60 2.80 l2.60 -2.80" fill="none" stroke="#777" stroke-width="1.1"/>
<path d="M1075.80 123.20 l2.60 2.80 l2.60 -2.80" fill="none" stroke="#777" stroke-width="1.1"/>
<g fill="none" stroke="#505050" stroke-width="1.100"><path d="M1088.4 151.7 v-6.5 h6.5" transform="translate(0,0)"/><path d="M1091.0 147.8 l4.3 4.3 M1095.4 152.2 v-3.4 M1095.4 152.2 h-3.4"/></g>
<circle cx="1120.400" cy="76.600" r="3.700" fill="none" stroke="#2e62a8" stroke-width="1.500"/><path d="M1117.800 79.400 l-5 5" stroke="#2e62a8" stroke-width="2"/>
<path d="M1114 104.400 v3 h3 M1114 107.400 l0 0" fill="none" stroke="#2e62a8" stroke-width="1"/><path d="M1112.200 104.800 l1.800 -2 l1.800 2 z" fill="#2e62a8"/>
<path d="M1116.200 117.600 v11.400 l2.600 -2.400 l1.800 4 l1.600 -0.700 l-1.800 -3.900 h3.600 z" fill="#fdfdfd" stroke="#333" stroke-width="0.900"/>
<path d="M1182.00 100.20 l2.60 2.80 l2.60 -2.80" fill="none" stroke="#262626" stroke-width="1.1"/>
<path d="M1164.80 123.20 l2.60 2.80 l2.60 -2.80" fill="none" stroke="#262626" stroke-width="1.1"/>
<circle cx="1231.800" cy="85.200" r="5.200" fill="#f29111"/>
<path d="M1347.800 151.200 l5 -4.600 l5 4.600" fill="none" stroke="#333" stroke-width="1.100"/>
</svg>
<span class="t" style="left:15.50px;top:107.00px;font-size:12px;color:#262626;letter-spacing:-0.637px;">Paste</span>
<span class="t" style="left:14.40px;top:142.00px;font-size:12px;color:#333;letter-spacing:-0.119px;">Clipboard</span>
<span class="t" style="left:113.90px;top:107.00px;font-size:12px;color:#262626;letter-spacing:-0.405px;">New</span>
<span class="t" style="left:107.60px;top:123.00px;font-size:12px;color:#262626;letter-spacing:-0.498px;">Slide</span>
<span class="t" style="left:168.70px;top:73.00px;font-size:12px;color:#262626;letter-spacing:-0.139px;">Layout</span>
<span class="t" style="left:168.70px;top:96.00px;font-size:12px;color:#262626;letter-spacing:-0.932px;">Reset</span>
<span class="t" style="left:168.40px;top:119.00px;font-size:12px;color:#262626;letter-spacing:-0.276px;">Section</span>
<span class="t" style="left:149.40px;top:142.00px;font-size:12px;color:#333;letter-spacing:-0.615px;">Slides</span>
<span class="t" style="left:410.40px;top:80.00px;font-size:15px;color:#777;letter-spacing:-0.516px;">A</span>
<span class="t" style="left:435.40px;top:83.00px;font-size:12.5px;color:#777;letter-spacing:-0.544px;">A</span>
<span class="t" style="left:463.70px;top:78.00px;font-size:10.5px;color:#8d8d8d;letter-spacing:-0.516px;font-style:italic;">A</span>
<span class="t" style="left:247.50px;top:110.00px;font-size:13px;color:#777;font-weight:bold;letter-spacing:-1.791px;">B</span>
<span class="t" style="left:272.00px;top:110.00px;font-size:13px;color:#777;letter-spacing:-0.062px;font-style:italic;font-family:'Liberation Serif',serif;font-weight:bold;">I</span>
<span class="t" style="left:295.00px;top:110.00px;font-size:12px;color:#777;letter-spacing:-0.072px;">U</span>
<span class="t" style="left:319.80px;top:110.00px;font-size:13px;color:#777;font-weight:bold;letter-spacing:-0.672px;text-shadow:1.5px 1.5px 1px #8e8e8e;">S</span>
<span class="t" style="left:340.60px;top:112.00px;font-size:10.5px;color:#777;letter-spacing:-0.512px;">abc</span>
<span class="t" style="left:364.40px;top:108.00px;font-size:10.5px;color:#777;letter-spacing:0.883px;">AV</span>
<span class="t" style="left:402.00px;top:110.00px;font-size:13px;color:#777;letter-spacing:-0.203px;">Aa</span>
<span class="t" style="left:450.40px;top:108.00px;font-size:15px;color:#777;letter-spacing:-0.416px;">A</span>
<span class="t" style="left:340.40px;top:142.00px;font-size:12px;color:#333;letter-spacing:-0.154px;">Font</span>
<span class="t" style="left:539.60px;top:77.00px;font-size:6.5px;color:#777;letter-spacing:-0.225px;">1</span>
<span class="t" style="left:539.60px;top:83.00px;font-size:6.5px;color:#777;letter-spacing:-0.225px;">2</span>
<span class="t" style="left:539.60px;top:89.00px;font-size:6.5px;color:#777;letter-spacing:-0.225px;">3</span>
<span class="t" style="left:703.80px;top:70.00px;font-size:10.5px;color:#777;letter-spacing:0.184px;">A</span>
<span class="t" style="left:618.40px;top:112.00px;font-size:12px;color:#777;font-weight:bold;letter-spacing:0.312px;">¶</span>
<span class="t" style="left:637.00px;top:112.00px;font-size:12px;color:#777;font-weight:bold;letter-spacing:0.312px;">¶</span>
<span class="t" style="left:578.30px;top:142.00px;font-size:12px;color:#333;letter-spacing:-0.416px;">Paragraph</span>
<span class="t" style="left:815.60px;top:114.00px;font-size:13px;color:#3a3a3a;letter-spacing:-0.344px;">{</span>
<span class="t" style="left:835.40px;top:114.00px;font-size:13px;color:#3a3a3a;letter-spacing:-0.344px;">}</span>
<span class="t" style="left:889.40px;top:107.00px;font-size:12px;color:#262626;letter-spacing:-0.158px;">Arrange</span>
<span class="t" style="left:941.80px;top:107.00px;font-size:12px;color:#777;letter-spacing:-0.138px;">Quick</span>
<span class="t" style="left:936.60px;top:123.00px;font-size:12px;color:#777;letter-spacing:-0.148px;">Styles</span>
<span class="t" style="left:888.80px;top:142.00px;font-size:12px;color:#333;letter-spacing:-0.217px;">Drawing</span>
<span class="t" style="left:1002.50px;top:73.00px;font-size:12px;color:#777;letter-spacing:-0.388px;">Shape Fill</span>
<span class="t" style="left:1002.50px;top:96.00px;font-size:12px;color:#777;letter-spacing:-0.213px;">Shape Outline</span>
<span class="t" style="left:1002.50px;top:119.00px;font-size:12px;color:#777;letter-spacing:-0.423px;">Shape Effects</span>
<span class="t" style="left:1130.30px;top:73.00px;font-size:12px;color:#262626;letter-spacing:-0.236px;">Find</span>
<span class="t" style="left:1130.30px;top:96.00px;font-size:12px;color:#262626;letter-spacing:-0.476px;">Replace</span>
<span class="t" style="left:1130.30px;top:119.00px;font-size:12px;color:#262626;letter-spacing:-0.377px;">Select</span>
<span class="t" style="left:1111.40px;top:94.00px;font-size:9.5px;color:#6b3fa0;font-weight:bold;letter-spacing:-0.347px;">ab</span>
<span class="t" style="left:1117.60px;top:102.00px;font-size:9.5px;color:#2e62a8;font-weight:bold;letter-spacing:-0.589px;">ac</span>
<span class="t" style="left:1132.40px;top:142.00px;font-size:12px;color:#333;letter-spacing:-0.072px;">Editing</span>
<span class="t" style="left:1212.00px;top:107.00px;font-size:12px;color:#262626;letter-spacing:0.188px;">Add-ins</span>
<span class="t" style="left:1213.00px;top:142.00px;font-size:12px;color:#333;letter-spacing:-0.141px;">Add-ins</span><div class="a" style="left:1350px;top:187px;width:15px;height:460px;background:#444"></div>
<div class="a" style="left:1351px;top:190px;width:13.500px;height:13.500px;background:#d2d2d2"></div>
<div class="a" style="left:1351px;top:503.500px;width:13px;height:16px;background:#d2d2d2"></div>
<div class="a" style="left:1351px;top:633px;width:13.500px;height:13.500px;background:#d2d2d2"></div>
<svg width="20" height="500" viewBox="1348 187 20 500" style="left:1348px;top:187px"><path d="M1354.200 198.600 l3.600 -4 l3.600 4 z M1354 638 h7.200 l-3.600 4 z" fill="#1a1a1a"/><path d="M1352.800 656.800 l4.600 -5.400 l4.600 5.400 z M1352.800 662.300 l4.600 -5.400 l4.600 5.400 z M1352.800 668.200 h9.200 l-4.600 5.400 z M1352.800 673.600 h9.200 l-4.600 5.400 z" fill="#c6c6c6"/></svg><div class="a" style="left:209px;top:703px;width:1157px;height:1px;background:#9a9a9a"></div><div class="a" style="left:209px;top:705px;width:1157px;height:1px;background:#5c5c5c"></div>
<div id="status"></div><div id="bottom"></div>
<div class="a" style="left:1008px;top:706.500px;width:40px;height:21.500px;background:#444"></div><div class="a" style="left:343px;top:728px;width:48px;height:3px;background:#565656"></div>
<svg width="1366" height="22" viewBox="0 706 1366 22" style="left:0;top:706px">
<g fill="none" stroke="#fff" stroke-width="1"><path d="M106.500 712 v10.600 M106.500 712 c-1.600 -1.400 -4 -1.600 -6 -1.400 v10.400 c2 -0.200 4.400 0 6 1.600 c1 -1 2 -1.400 3.200 -1.500 M106.500 712 c1.400 -1.200 3 -1.500 4.600 -1.500"/><path d="M109.400 719.600 l0.800 -2.600 l4.600 -5.400 l1.600 1.400 l-4.600 5.400 z"/></g>
<g fill="none" stroke="#fff" stroke-width="1.100"><path d="M268.600 711 a5.600 5.600 0 1 0 4 9.600" stroke-dasharray="2.600 1.600"/><path d="M270.400 709 v6.400 M267.600 713.200 l2.800 2.600 l2.800 -2.600"/><path d="M272.400 716.200 l5.800 5.800 M278.200 716.200 l-5.800 5.800" stroke-width="1.500"/></g>
<path d="M852.400 716 h9.600 M852.400 718.800 h9.600 M852.400 721.600 h9.600" stroke="#fff" stroke-width="1"/><path d="M854.700 713.600 l2.500 -2.800 l2.500 2.800 z" fill="#fff"/>
<path d="M918.400 709.800 h13 v8.600 h-7.600 l-3.400 3.400 v-3.400 h-2 z" fill="#fff"/>
<rect x="1021.300" y="710.600" width="13.200" height="12" fill="none" stroke="#fff" stroke-width="1.200"/><rect x="1021" y="710.600" width="3.300" height="12" fill="#fff"/><path d="M1024 718.600 h10.500" stroke="#fff" stroke-width="1.200"/><rect x="1027" y="713.300" width="4.600" height="2.600" fill="#fff"/>
<g fill="#fff"><rect x="1060.600" y="710.400" width="6" height="5.400"/><rect x="1068.800" y="710.400" width="6" height="5.400"/><rect x="1060.600" y="717.600" width="6" height="5.400"/><rect x="1068.800" y="717.600" width="6" height="5.400"/></g>
<g fill="none" stroke="#fff" stroke-width="1"><path d="M1107.400 711.600 v10.800 M1107.400 711.600 c-1.600 -1.200 -4 -1.400 -6 -1.200 v10.400 c2 -0.200 4.400 0 6 1.600 c1.600 -1.600 4 -1.800 6 -1.600 v-10.400 c-2 -0.200 -4.400 0 -6 1.200"/><path d="M1102.800 713.400 h3 M1102.800 715.600 h3 M1102.800 717.800 h3 M1109 713.400 h3 M1109 715.600 h3 M1109 717.800 h3" stroke-width="0.800"/></g>
<g fill="none" stroke="#fff" stroke-width="1.100"><path d="M1140.600 711 h13.800 M1142 711.400 v6.400 h11 v-6.400 M1147.500 717.800 v4 M1144.600 722.400 h5.800"/></g>
<path d="M1174.400 717.200 h6.600 M1292.400 717.200 h7 M1295.900 713.700 v7" stroke="#fff" stroke-width="1"/><path d="M1187.500 717.200 h99.500" stroke="#d0d0d0" stroke-width="1"/><path d="M1237.200 714.600 v5.200" stroke="#d0d0d0" stroke-width="1"/><rect x="1217.800" y="711.400" width="4.600" height="12" fill="#fff"/>
<g fill="none" stroke="#fff" stroke-width="1"><rect x="1348.400" y="711.400" width="11" height="11.400"/><path d="M1353.900 713 v8 M1350 717.100 h7.800 M1352.400 714.400 l1.500 -1.500 l1.500 1.500 M1352.400 719.800 l1.500 1.500 l1.500 -1.500"/></g>
</svg>
<span class="t" style="left:12.30px;top:712.00px;font-size:11.6px;color:#fff;letter-spacing:-0.158px;">Slide 41 of 56</span>
<span class="t" style="left:131.00px;top:712.00px;font-size:11.6px;color:#fff;letter-spacing:-0.125px;">English (United States)</span>
<span class="t" style="left:282.00px;top:713.00px;font-size:11px;color:#fff;font-weight:bold;letter-spacing:-0.225px;">Accessibility: Investigate</span>
<span class="t" style="left:868.40px;top:712.00px;font-size:11.6px;color:#fff;letter-spacing:-0.179px;">Notes</span>
<span class="t" style="left:935.50px;top:712.00px;font-size:11.6px;color:#fff;letter-spacing:-0.370px;">Comments</span>
<span class="t" style="left:1313.00px;top:713.00px;font-size:11px;color:#fff;letter-spacing:-0.410px;">68%</span>
</body>
</html>
